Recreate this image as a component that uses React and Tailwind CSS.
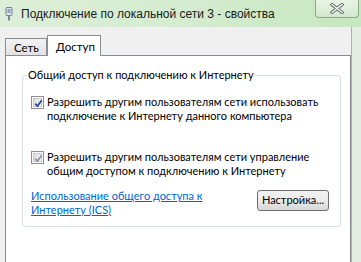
import React from "react";

function CheckBox({ disabled }) {
  return (
    <div className="w-[13px] h-[13px] shrink-0 border border-[#8e8f8f] bg-white p-[1px]">
      <div className="w-full h-full border border-[#c6c9cc] bg-gradient-to-br from-[#dcdcdc] to-[#fbfbfb] relative">
        <svg width="9" height="9" viewBox="0 0 9 9" className="absolute left-0 top-0">
          <path
            d="M1.2 4.6 L3.4 7 L7.8 1.2"
            fill="none"
            stroke={disabled ? "#8a96ad" : "#28479c"}
            strokeWidth="1.8"
          />
        </svg>
      </div>
    </div>
  );
}

export default function App() {
  return (
    <div
      className="w-[361px] h-[262px] overflow-hidden relative bg-[#e3ede1] text-[11px] text-black"
      style={{ fontFamily: 'Lato, "Liberation Sans", Arial, sans-serif' }}
    >
      {/* title bar */}
      <div className="h-[27px] flex items-center bg-gradient-to-r from-[#dcefd8] via-[#d4ecd0] to-[#c6e7bf]">
        <svg width="8" height="14" viewBox="0 0 8 14" className="ml-[5px] mt-[1px]">
          <rect x="1" y="0.5" width="6" height="8" rx="1" fill="#dfe6ee" stroke="#6f7f92" />
          <rect x="2.5" y="2" width="3" height="4" fill="#8aa4c4" />
          <rect x="3" y="8.5" width="2" height="5" fill="#7a8898" />
        </svg>
        <div
          className="ml-[8px] text-[12px] text-[#1a1a1a] whitespace-nowrap"
          style={{ fontFamily: '"Liberation Sans", Arial, sans-serif' }}
        >
          Подключение по локальной сети 3 - свойства
        </div>
      </div>
      {/* close button */}
      <div className="absolute top-0 left-[315px] w-[44px] h-[18px] rounded-b-[4px] border border-t-0 border-[#8fa88b] bg-gradient-to-b from-[#e8f4e5] to-[#d2e8ce] flex items-center justify-center">
        <svg width="14" height="11" viewBox="0 0 14 11">
          <path d="M2 1.5 L12 9.5 M12 1.5 L2 9.5" stroke="#5f6b5e" strokeWidth="3.2" strokeLinecap="square" />
          <path d="M2 1.5 L12 9.5 M12 1.5 L2 9.5" stroke="#ffffff" strokeWidth="1.3" strokeLinecap="square" />
        </svg>
      </div>
      {/* body */}
      <div className="flex h-[235px]">
        <div className="w-[352px] h-full bg-[#f0f0f0] border-r border-[#a9b3a8] pt-[8px] pl-[5px]">
          {/* tabs */}
          <div className="h-[20px] flex items-end relative z-10 text-[11.5px]">
            <div className="w-[42px] h-[17px] border border-b-0 border-[#898c95] bg-gradient-to-b from-[#f3f3f3] to-[#e2e2e2] flex items-center pl-[8px] pt-[2px]">
              Сеть
            </div>
            <div className="w-[54px] h-[21px] -mb-[1px] border border-b-0 border-[#898c95] bg-white flex items-start pl-[8px] pt-[2px]">
              Доступ
            </div>
          </div>
          {/* panel */}
          <div className="w-[346px] h-[220px] border border-[#898c95] bg-white pt-[19px] pl-[16px]">
            {/* group box */}
            <div className="relative w-[319px] h-[152px] border border-[#d5dfe5] rounded-[3px] pt-[19px] pl-[8px] pr-[11px] whitespace-nowrap">
              <div className="absolute -top-[8px] left-[4px] bg-white px-[1px] leading-[14px]">
                Общий доступ к подключению к Интернету
              </div>
              <div className="flex items-start gap-[3px]">
                <div className="mt-[1px]"><CheckBox /></div>
                <div className="leading-[14px]">
                  Разрешить другим пользователям сети использовать
                  <br />
                  подключение к Интернету данного компьютера
                </div>
              </div>
              <div className="flex items-start gap-[3px] mt-[27px]">
                <div className="mt-[1px]"><CheckBox disabled /></div>
                <div className="leading-[14px]">
                  Разрешить другим пользователям сети управление
                  <br />
                  общим доступом к подключению к Интернету
                </div>
              </div>
              <div className="flex items-start justify-between mt-[11px]">
                <div className="leading-[14px] text-[#0066cc] underline">
                  Использование общего доступа к
                  <br />
                  Интернету (ICS)
                </div>
                <div className="w-[72px] h-[21px] mt-[1px] rounded-[3px] border border-[#707070] bg-gradient-to-b from-[#f2f2f2] via-[#ebebeb] to-[#d6d6d6] flex items-center justify-center">
                  Настройка...
                </div>
              </div>
            </div>
          </div>
        </div>
        <div className="flex-1 bg-[#e3ede1]" />
      </div>
    </div>
  );
}
